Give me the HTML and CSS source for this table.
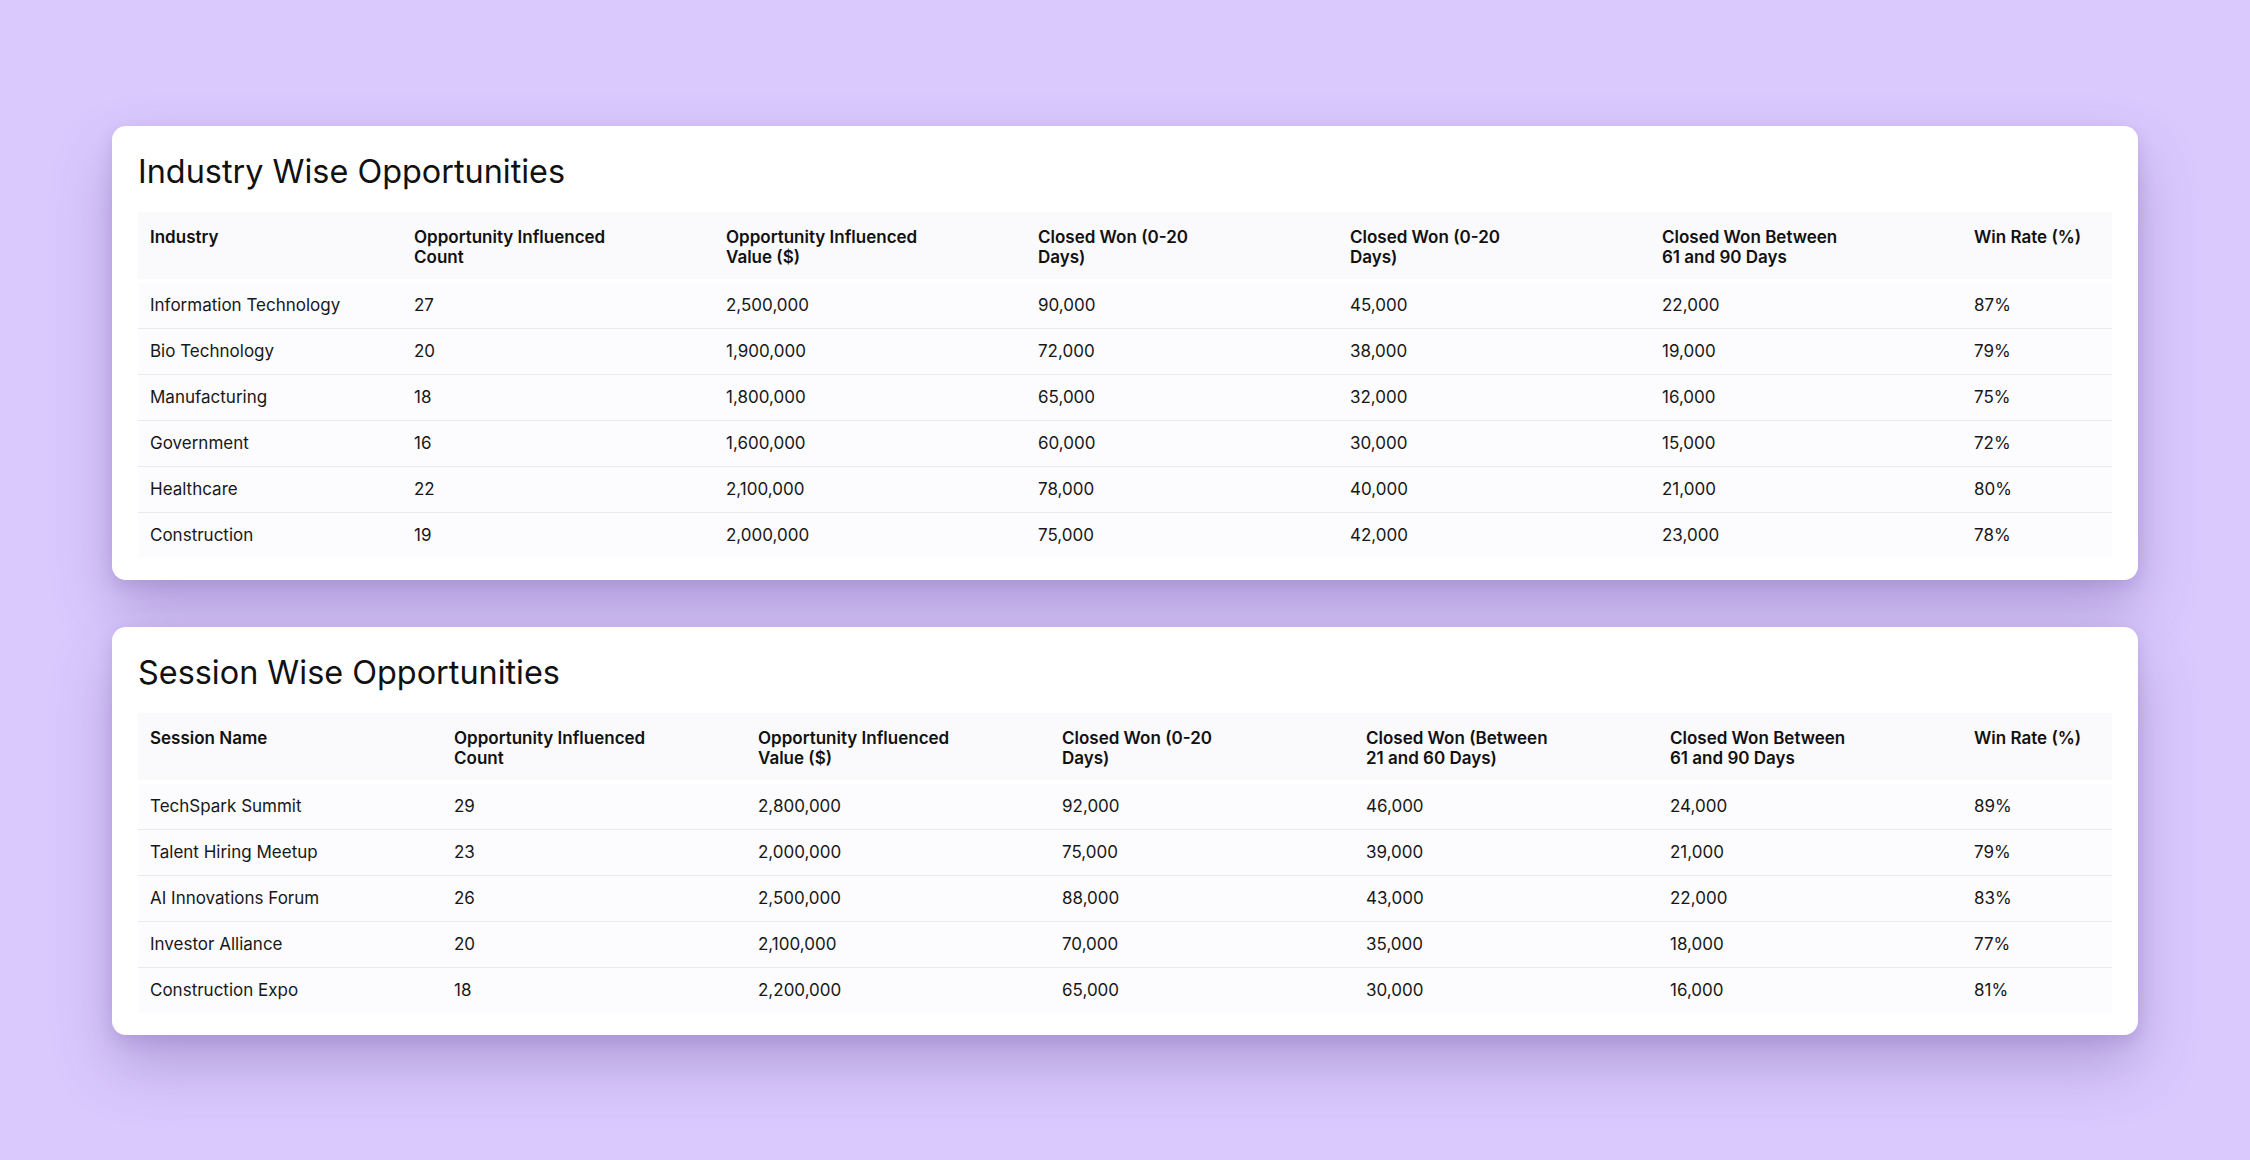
FILE: index.html
```html
<!DOCTYPE html>
<html lang="en">
<head>
<meta charset="utf-8">
<title>Opportunities</title>
<link rel="stylesheet" href="styles.css">
</head>
<body>
<main class="page">
  <section class="card">
    <h2 class="card-title">Industry Wise Opportunities</h2>
    <table class="data-table">
      <colgroup>
        <col class="c-ind-1"><col class="c-ind-n"><col class="c-ind-n"><col class="c-ind-n"><col class="c-ind-n"><col class="c-ind-n"><col class="c-last">
      </colgroup>
      <thead>
        <tr>
          <th>Industry</th>
          <th>Opportunity Influenced<br>Count</th>
          <th>Opportunity Influenced<br>Value ($)</th>
          <th>Closed Won (0-20<br>Days)</th>
          <th>Closed Won (0-20<br>Days)</th>
          <th>Closed Won Between<br>61 and 90 Days</th>
          <th>Win Rate (%)</th>
        </tr>
      </thead>
      <tbody>
        <tr><td>Information Technology</td><td>27</td><td>2,500,000</td><td>90,000</td><td>45,000</td><td>22,000</td><td>87%</td></tr>
        <tr><td>Bio Technology</td><td>20</td><td>1,900,000</td><td>72,000</td><td>38,000</td><td>19,000</td><td>79%</td></tr>
        <tr><td>Manufacturing</td><td>18</td><td>1,800,000</td><td>65,000</td><td>32,000</td><td>16,000</td><td>75%</td></tr>
        <tr><td>Government</td><td>16</td><td>1,600,000</td><td>60,000</td><td>30,000</td><td>15,000</td><td>72%</td></tr>
        <tr><td>Healthcare</td><td>22</td><td>2,100,000</td><td>78,000</td><td>40,000</td><td>21,000</td><td>80%</td></tr>
        <tr><td>Construction</td><td>19</td><td>2,000,000</td><td>75,000</td><td>42,000</td><td>23,000</td><td>78%</td></tr>
      </tbody>
    </table>
  </section>

  <section class="card">
    <h2 class="card-title">Session Wise Opportunities</h2>
    <table class="data-table">
      <colgroup>
        <col class="c-ses"><col class="c-ses"><col class="c-ses"><col class="c-ses"><col class="c-ses"><col class="c-ses"><col class="c-last">
      </colgroup>
      <thead>
        <tr>
          <th>Session Name</th>
          <th>Opportunity Influenced<br>Count</th>
          <th>Opportunity Influenced<br>Value ($)</th>
          <th>Closed Won (0-20<br>Days)</th>
          <th>Closed Won (Between<br>21 and 60 Days)</th>
          <th>Closed Won Between<br>61 and 90 Days</th>
          <th>Win Rate (%)</th>
        </tr>
      </thead>
      <tbody>
        <tr><td>TechSpark Summit</td><td>29</td><td>2,800,000</td><td>92,000</td><td>46,000</td><td>24,000</td><td>89%</td></tr>
        <tr><td>Talent Hiring Meetup</td><td>23</td><td>2,000,000</td><td>75,000</td><td>39,000</td><td>21,000</td><td>79%</td></tr>
        <tr><td>AI Innovations Forum</td><td>26</td><td>2,500,000</td><td>88,000</td><td>43,000</td><td>22,000</td><td>83%</td></tr>
        <tr><td>Investor Alliance</td><td>20</td><td>2,100,000</td><td>70,000</td><td>35,000</td><td>18,000</td><td>77%</td></tr>
        <tr><td>Construction Expo</td><td>18</td><td>2,200,000</td><td>65,000</td><td>30,000</td><td>16,000</td><td>81%</td></tr>
      </tbody>
    </table>
  </section>
</main>
</body>
</html>
```

FILE: styles.css
```css
* {
  box-sizing: border-box;
}

html, body {
  margin: 0;
  padding: 0;
}

body {
  width: 2250px;
  height: 1160px;
  overflow: hidden;
  background: #dac9fd;
  font-family: Inter, "Noto Sans", "Liberation Sans", sans-serif;
  color: #141414;
}

.page {
  padding: 126px 112px 0;
  display: flex;
  flex-direction: column;
  gap: 47px;
}

.card {
  background: #ffffff;
  border-radius: 14px;
  padding: 26px 26px 22px;
  box-shadow: 0 30px 60px rgba(90, 60, 145, 0.3), 0 6px 16px rgba(90, 60, 145, 0.15);
}

.card-title {
  margin: 0 0 20px;
  font-size: 32.4px;
  line-height: 40px;
  font-weight: 400;
  color: #111111;
}

.data-table {
  width: 100%;
  table-layout: fixed;
  border-collapse: separate;
  border-spacing: 0;
  font-size: 17px;
}

.c-ind-1 { width: 264px; }
.c-ind-n { width: 312px; }
.c-ses { width: 304px; }
.c-last { width: auto; }

.data-table th {
  text-align: left;
  vertical-align: top;
  font-weight: 600;
  line-height: 19.5px;
  padding: 16px 12px 12px;
  background: #faf9fc;
  color: #111111;
  border-bottom: 4px solid #ffffff;
}

.data-table td {
  padding: 10px 12px 11px;
  line-height: 24px;
  background: #fcfbfd;
  color: #181818;
  border-bottom: 1px solid #ebe9ef;
  white-space: nowrap;
}

.data-table tbody tr:last-child td {
  border-bottom: none;
}
```
